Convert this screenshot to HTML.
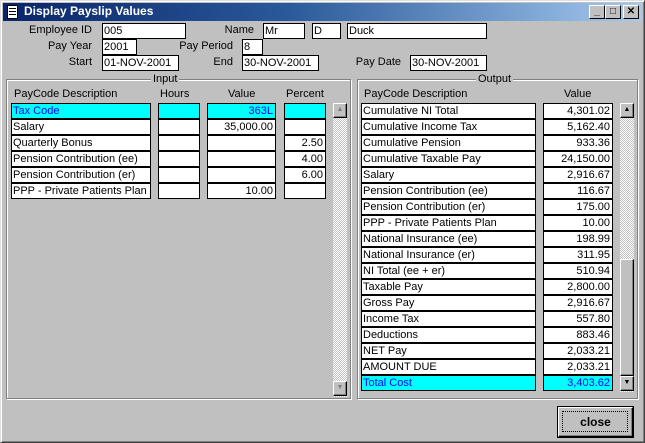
<!DOCTYPE html>
<html><head><style>
*{margin:0;padding:0;box-sizing:border-box}
body{width:645px;height:443px;background:#c0c0c0;font-family:"Liberation Sans",sans-serif;font-size:11px;position:relative;overflow:hidden}
.a{position:absolute}
.win{left:0;top:0;width:645px;height:443px;border:1px solid #dfdfdf;border-right-color:#404040;border-bottom-color:#404040;box-shadow:inset 1px 1px #fff,inset -1px -1px #808080}
.title{left:3px;top:3px;width:639px;height:18px;background:linear-gradient(90deg,#0a246a 0%,#2a5a9a 45%,#a6caf0 100%)}
.tt{left:24px;top:4px;color:#fff;font-weight:bold;font-size:12px}
.tb{top:5px;width:16px;height:14px;background:#c0c0c0;border:1px solid #fff;border-right-color:#000;border-bottom-color:#000;font-size:10px;font-weight:bold;text-align:center;line-height:11px}
.lbl{text-align:right;line-height:15px}
.f{background:#fff;border:1px solid #000;height:16px;line-height:14px;padding-left:1px;white-space:nowrap;overflow:hidden}
.r{text-align:right;padding-right:2px}
.cy{background:#00ffff;color:#0000ff}
.grp{border:1px solid #808080;box-shadow:1px 1px #fff,inset 1px 1px #fff}
.leg{background:#c0c0c0;padding:0 2px;line-height:12px}
.sb{background-color:#e8e8e8;background-image:repeating-conic-gradient(#c0c0c0 0 25%,#fff 0 50%);background-size:2px 2px}
.btn{background:#c0c0c0;border:1px solid #fff;border-right-color:#000;border-bottom-color:#000;box-shadow:inset -1px -1px #808080}
</style></head><body>
<div class="a win"></div>
<div class="a title"></div>
<div class="a" style="left:7px;top:5px;width:11px;height:14px;background:#fff;border:1px solid #000"><div style="margin:2px 1px;height:1px;background:#000;box-shadow:0 3px #000,0 6px #000"></div></div>
<div class="a tt">Display Payslip Values</div>
<div class="a tb" style="left:589px">_</div>
<div class="a tb" style="left:605px">□</div>
<div class="a tb" style="left:623px">✕</div>

<div class="a lbl" style="left:20px;top:23px;width:72px">Employee ID</div>
<div class="a f" style="left:102px;top:23px;width:84px">005</div>
<div class="a lbl" style="left:200px;top:23px;width:54px">Name</div>
<div class="a f" style="left:263px;top:23px;width:42px">Mr</div>
<div class="a f" style="left:312px;top:23px;width:29px">D</div>
<div class="a f" style="left:347px;top:23px;width:140px">Duck</div>

<div class="a lbl" style="left:20px;top:39px;width:72px">Pay Year</div>
<div class="a f" style="left:102px;top:39px;width:35px">2001</div>
<div class="a lbl" style="left:150px;top:39px;width:83px">Pay Period</div>
<div class="a f" style="left:242px;top:39px;width:21px">8</div>

<div class="a lbl" style="left:20px;top:55px;width:72px">Start</div>
<div class="a f" style="left:102px;top:55px;width:77px">01-NOV-2001</div>
<div class="a lbl" style="left:180px;top:55px;width:53px">End</div>
<div class="a f" style="left:242px;top:55px;width:77px">30-NOV-2001</div>
<div class="a lbl" style="left:340px;top:55px;width:61px">Pay Date</div>
<div class="a f" style="left:410px;top:55px;width:77px">30-NOV-2001</div>

<div class="a grp" style="left:6px;top:79px;width:345px;height:320px"></div>
<div class="a leg" style="left:151px;top:73px">Input</div>
<div class="a grp" style="left:357px;top:79px;width:281px;height:320px"></div>
<div class="a leg" style="left:476px;top:73px">Output</div>

<div class="a" style="left:14px;top:88px">PayCode Description</div>
<div class="a" style="left:160px;top:88px">Hours</div>
<div class="a" style="left:228px;top:88px">Value</div>
<div class="a" style="left:286px;top:88px">Percent</div>

<div class="a f cy" style="left:11px;top:103px;width:140px">Tax Code</div><div class="a f cy" style="left:158px;top:103px;width:42px"></div><div class="a f cy r" style="left:207px;top:103px;width:69px">363L</div><div class="a f cy" style="left:284px;top:103px;width:42px"></div>
<div class="a f" style="left:11px;top:119px;width:140px">Salary</div><div class="a f" style="left:158px;top:119px;width:42px"></div><div class="a f r" style="left:207px;top:119px;width:69px">35,000.00</div><div class="a f" style="left:284px;top:119px;width:42px"></div>
<div class="a f" style="left:11px;top:135px;width:140px">Quarterly Bonus</div><div class="a f" style="left:158px;top:135px;width:42px"></div><div class="a f" style="left:207px;top:135px;width:69px"></div><div class="a f r" style="left:284px;top:135px;width:42px">2.50</div>
<div class="a f" style="left:11px;top:151px;width:140px">Pension Contribution (ee)</div><div class="a f" style="left:158px;top:151px;width:42px"></div><div class="a f" style="left:207px;top:151px;width:69px"></div><div class="a f r" style="left:284px;top:151px;width:42px">4.00</div>
<div class="a f" style="left:11px;top:167px;width:140px">Pension Contribution (er)</div><div class="a f" style="left:158px;top:167px;width:42px"></div><div class="a f" style="left:207px;top:167px;width:69px"></div><div class="a f r" style="left:284px;top:167px;width:42px">6.00</div>
<div class="a f" style="left:11px;top:183px;width:140px">PPP - Private Patients Plan</div><div class="a f" style="left:158px;top:183px;width:42px"></div><div class="a f r" style="left:207px;top:183px;width:69px">10.00</div><div class="a f" style="left:284px;top:183px;width:42px"></div>

<div class="a sb" style="left:333px;top:103px;width:14px;height:294px"></div>
<div class="a btn" style="left:333px;top:103px;width:14px;height:15px;color:#808080;font-size:7px;text-align:center;line-height:12px">▲</div>
<div class="a btn" style="left:333px;top:381px;width:14px;height:15px;color:#808080;font-size:7px;text-align:center;line-height:12px">▼</div>

<div class="a" style="left:364px;top:88px">PayCode Description</div>
<div class="a" style="left:564px;top:88px">Value</div>

<div class="a" style="left:361px;top:103px">
<div style="position:relative">
<div class="a f" style="left:0;top:0;width:175px">Cumulative NI Total</div><div class="a f r" style="left:182px;top:0;width:70px">4,301.02</div>
<div class="a f" style="left:0;top:16px;width:175px">Cumulative Income Tax</div><div class="a f r" style="left:182px;top:16px;width:70px">5,162.40</div>
<div class="a f" style="left:0;top:32px;width:175px">Cumulative Pension</div><div class="a f r" style="left:182px;top:32px;width:70px">933.36</div>
<div class="a f" style="left:0;top:48px;width:175px">Cumulative Taxable Pay</div><div class="a f r" style="left:182px;top:48px;width:70px">24,150.00</div>
<div class="a f" style="left:0;top:64px;width:175px">Salary</div><div class="a f r" style="left:182px;top:64px;width:70px">2,916.67</div>
<div class="a f" style="left:0;top:80px;width:175px">Pension Contribution (ee)</div><div class="a f r" style="left:182px;top:80px;width:70px">116.67</div>
<div class="a f" style="left:0;top:96px;width:175px">Pension Contribution (er)</div><div class="a f r" style="left:182px;top:96px;width:70px">175.00</div>
<div class="a f" style="left:0;top:112px;width:175px">PPP - Private Patients Plan</div><div class="a f r" style="left:182px;top:112px;width:70px">10.00</div>
<div class="a f" style="left:0;top:128px;width:175px">National Insurance (ee)</div><div class="a f r" style="left:182px;top:128px;width:70px">198.99</div>
<div class="a f" style="left:0;top:144px;width:175px">National Insurance (er)</div><div class="a f r" style="left:182px;top:144px;width:70px">311.95</div>
<div class="a f" style="left:0;top:160px;width:175px">NI Total (ee + er)</div><div class="a f r" style="left:182px;top:160px;width:70px">510.94</div>
<div class="a f" style="left:0;top:176px;width:175px">Taxable Pay</div><div class="a f r" style="left:182px;top:176px;width:70px">2,800.00</div>
<div class="a f" style="left:0;top:192px;width:175px">Gross Pay</div><div class="a f r" style="left:182px;top:192px;width:70px">2,916.67</div>
<div class="a f" style="left:0;top:208px;width:175px">Income Tax</div><div class="a f r" style="left:182px;top:208px;width:70px">557.80</div>
<div class="a f" style="left:0;top:224px;width:175px">Deductions</div><div class="a f r" style="left:182px;top:224px;width:70px">883.46</div>
<div class="a f" style="left:0;top:240px;width:175px">NET Pay</div><div class="a f r" style="left:182px;top:240px;width:70px">2,033.21</div>
<div class="a f" style="left:0;top:256px;width:175px">AMOUNT DUE</div><div class="a f r" style="left:182px;top:256px;width:70px">2,033.21</div>
<div class="a f cy" style="left:0;top:272px;width:175px">Total Cost</div><div class="a f cy r" style="left:182px;top:272px;width:70px">3,403.62</div>
</div></div>

<div class="a sb" style="left:620px;top:103px;width:14px;height:289px"></div>
<div class="a btn" style="left:620px;top:259px;width:14px;height:117px"></div>
<div class="a btn" style="left:620px;top:103px;width:14px;height:15px;font-size:7px;text-align:center;line-height:12px">▲</div>
<div class="a btn" style="left:620px;top:376px;width:14px;height:15px;font-size:7px;text-align:center;line-height:12px">▼</div>

<div class="a" style="left:557px;top:406px;width:77px;height:32px;border:1px solid #000"></div>
<div class="a btn" style="left:558px;top:407px;width:75px;height:30px;font-weight:bold;font-size:12px;text-align:center;line-height:28px"><div style="position:absolute;left:3px;top:3px;right:4px;bottom:4px;border:1px dotted #000"></div>close</div>
</body></html>
